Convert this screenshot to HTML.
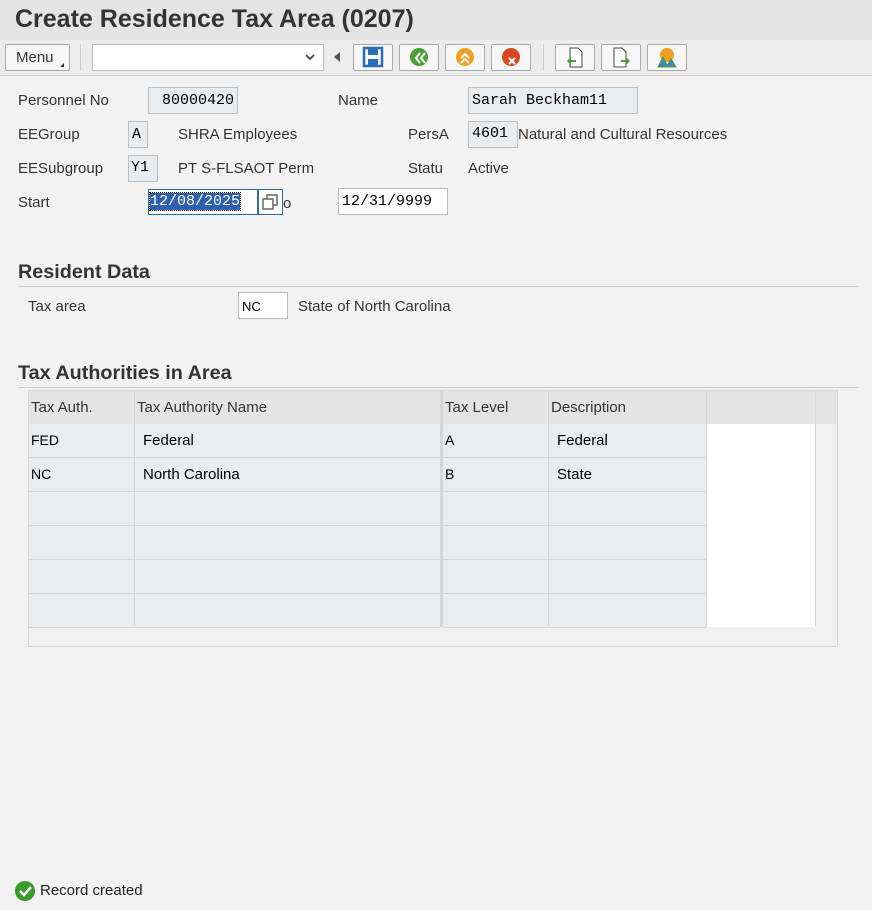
<!DOCTYPE html>
<html><head><style>
body{margin:0;width:872px;height:910px;background:#f2f2f2;font-family:"Liberation Sans",sans-serif;position:relative;overflow:hidden;color:#333}
.a{position:absolute}
.t{font-size:15px;color:#333}
.mono{font-family:"Liberation Mono",monospace;font-size:15px;color:#000}
.fld{position:absolute;border:1px solid #bfbfbf;background:#eaedf0;box-sizing:border-box}
.btn{position:absolute;top:44px;width:40px;height:27px;border:1px solid #aaa;background:#f7f7f7;box-sizing:border-box;border-radius:2px}
.cell{position:absolute;box-sizing:border-box;font-size:15px;color:#000}
</style></head><body>
<div class="a" style="left:0;top:0;width:872px;height:40px;background:#e4e4e4"></div>
<div class="a" style="left:15px;top:5px;font-size:25px;font-weight:bold;color:#333">Create Residence Tax Area (0207)</div>
<div class="a" style="left:0;top:40px;width:872px;height:35px;background:#ececec;border-bottom:1px solid #cfcfcf"></div>
<div class="a" style="left:5px;top:44px;width:65px;height:27px;border:1px solid #aaa;background:#f7f7f7;box-sizing:border-box;border-radius:2px;font-size:15px;padding:4px 0 0 10px">Menu</div>
<div class="a" style="left:60px;top:63px;border-left:4px solid transparent;border-bottom:4px solid #333"></div>
<div class="a" style="left:80px;top:44px;width:1px;height:27px;background:#ccc"></div>
<div class="a" style="left:92px;top:44px;width:232px;height:27px;border:1px solid #bbb;background:#fff;box-sizing:border-box"></div>
<svg class="a" style="left:304px;top:53px" width="12" height="10"><path d="M2 2l4 4 4-4" stroke="#555" stroke-width="2" fill="none"/></svg>
<div class="a" style="left:334px;top:52px;border-right:6px solid #555;border-top:5px solid transparent;border-bottom:5px solid transparent"></div>
<div class="btn" style="left:353px"><svg width="38" height="25"><rect x="10" y="3" width="18" height="18" fill="none" stroke="#2a6fb5" stroke-width="2.5"/><rect x="14" y="4" width="10" height="6" fill="#2a6fb5"/><rect x="14" y="14" width="10" height="6" fill="#2a6fb5"/></svg></div>
<div class="btn" style="left:399px"><svg width="38" height="25"><circle cx="19" cy="12" r="9" fill="#4aa033"/><path d="M20 8l-4 5 4 5M25 8l-4 5 4 5" stroke="#fff" stroke-width="2" fill="none"/></svg></div>
<div class="btn" style="left:445px"><svg width="38" height="25"><circle cx="19" cy="12" r="9" fill="#f0a020"/><path d="M15 13l4-4 4 4M15 18l4-4 4 4" stroke="#fff" stroke-width="2" fill="none"/></svg></div>
<div class="btn" style="left:491px"><svg width="38" height="25"><circle cx="19" cy="12" r="9" fill="#d9461f"/><path d="M17 13l6 6M23 13l-6 6" stroke="#fff" stroke-width="2"/></svg></div>
<div class="a" style="left:543px;top:44px;width:1px;height:27px;background:#ccc"></div>
<div class="btn" style="left:555px"><svg width="38" height="25"><path d="M14 3h8l4 4v15H14z" fill="#fff" stroke="#444"/><path d="M11 16l4-4v8z" fill="#4aa033"/><rect x="14" y="15" width="6" height="2" fill="#4aa033"/></svg></div>
<div class="btn" style="left:601px"><svg width="38" height="25"><path d="M12 3h8l4 4v15H12z" fill="#fff" stroke="#444"/><path d="M28 16l-4-4v8z" fill="#4aa033"/><rect x="19" y="15" width="6" height="2" fill="#4aa033"/></svg></div>
<div class="btn" style="left:647px"><svg width="38" height="25"><circle cx="19" cy="10" r="7" fill="#f0a020"/><path d="M10 22l5-10 5 10zM18 22l5-8 5 8z" fill="#3a86c8" stroke="#4aa033"/></svg></div>

<div class="a t" style="left:18px;top:92px">Personnel No</div>
<div class="fld" style="left:148px;top:87px;width:90px;height:27px"><span class="mono a" style="left:13px;top:4px">80000420</span></div>
<div class="a t" style="left:338px;top:92px">Name</div>
<div class="fld" style="left:468px;top:87px;width:170px;height:27px"><span class="mono a" style="left:3px;top:4px">Sarah Beckham11</span></div>

<div class="a t" style="left:18px;top:126px">EEGroup</div>
<div class="fld" style="left:128px;top:121px;width:20px;height:27px"><span class="mono a" style="left:3px;top:4px">A</span></div>
<div class="a t" style="left:178px;top:126px">SHRA Employees</div>
<div class="a t" style="left:408px;top:126px">PersA</div>
<div class="fld" style="left:468px;top:121px;width:50px;height:27px"><span class="mono a" style="left:3px;top:3px">4601</span></div>
<div class="a t" style="left:518px;top:126px">Natural and Cultural Resources</div>

<div class="a t" style="left:18px;top:160px">EESubgroup</div>
<div class="fld" style="left:128px;top:155px;width:30px;height:27px"><span class="mono a" style="left:2px;top:3px">Y1</span></div>
<div class="a t" style="left:178px;top:160px">PT S-FLSAOT Perm</div>
<div class="a t" style="left:408px;top:160px">Statu</div>
<div class="a t" style="left:468px;top:160px">Active</div>

<div class="a t" style="left:18px;top:194px">Start</div>
<div class="a" style="left:148px;top:189px;width:110px;height:26px;border:1px solid #2a6f9a;background:#fff;box-sizing:border-box"><span class="mono a" style="left:1px;top:3px;background:#2f5faf;color:#fff;outline:1px dotted #000">12/08/2025</span></div>
<div class="a" style="left:258px;top:189px;width:25px;height:26px;border:1px solid #2a6f9a;background:#fff;box-sizing:border-box"><svg width="23" height="24"><rect x="4" y="9" width="10" height="10" fill="none" stroke="#666" stroke-width="1.5"/><path d="M8 9V5h10v10h-4" fill="none" stroke="#666" stroke-width="1.5"/></svg></div>
<div class="a t" style="left:283px;top:195px">o</div>
<div class="a" style="left:338px;top:188px;width:110px;height:27px;border:1px solid #bbb;background:#fff;box-sizing:border-box"><span class="mono a" style="left:3px;top:4px">12/31/9999</span></div>

<div class="a" style="left:18px;top:261px;font-size:19.8px;font-weight:bold;color:#333">Resident Data</div>
<div class="a" style="left:18px;top:286px;width:840px;height:1px;background:#ccc"></div>
<div class="a t" style="left:28px;top:298px">Tax area</div>
<div class="a" style="left:238px;top:292px;width:50px;height:27px;border:1px solid #bbb;background:#fff;box-sizing:border-box"><span class="a" style="left:3px;top:6px;font-size:13px;color:#000">NC</span></div>
<div class="a t" style="left:298px;top:298px">State of North Carolina</div>

<div class="a" style="left:18px;top:362px;font-size:19.8px;font-weight:bold;color:#333">Tax Authorities in Area</div>
<div class="a" style="left:18px;top:387px;width:840px;height:1px;background:#ccc"></div>

<div class="a" style="left:28px;top:390px;width:810px;height:257px;border:1px solid #d6d6d6;background:#f0f0f0;box-sizing:border-box"></div>
<div class="a" style="left:29px;top:391px;width:808px;height:33px;background:#e4e4e4"></div>
<div class="a" style="left:706px;top:424px;width:109px;height:203px;background:#fff"></div>
<div class="a" style="left:815px;top:391px;width:1px;height:236px;background:#d6d6d6"></div>
<div class="a" style="left:706px;top:391px;width:1px;height:33px;background:#d0d0d0"></div>
<div id="tb"></div>
<script>
var cols=[[29,134],[135,440],[443,548],[549,706]];
var rows=[["FED","Federal","A","Federal"],["NC","North Carolina","B","State"],["","","",""],["","","",""],["","","",""],["","","",""]];
var h="";
cols.forEach(function(c,i){h+='<div class="a" style="left:'+(c[1])+'px;top:391px;width:'+(i==1?3:1)+'px;height:236px;background:#d6d6d6"></div>';});
var hd=["Tax Auth.","Tax Authority Name","Tax Level","Description"];
cols.forEach(function(c,i){h+='<div class="cell" style="left:'+(c[0]+2)+'px;top:399px;color:#333">'+hd[i]+'</div>';});
rows.forEach(function(r,j){var y=424+j*34;
cols.forEach(function(c,i){h+='<div class="a" style="left:'+c[0]+'px;top:'+y+'px;width:'+(c[1]-c[0])+'px;height:33px;background:#e8ecef;border-bottom:1px solid #d6d6d6"></div>';
if(r[i]){var mono=(i==0||i==2);h+='<div class="cell" style="left:'+(c[0]+(mono?2:8))+'px;top:'+(y+8)+'px;'+(mono?'font-size:14px':'')+'">'+r[i]+'</div>';}});});
document.getElementById('tb').innerHTML=h;
</script>

<svg class="a" style="left:14px;top:880px" width="22" height="22"><circle cx="11" cy="11" r="10" fill="#3a9a2a"/><path d="M6 11l4 4 7-8" stroke="#fff" stroke-width="2.5" fill="none"/></svg>
<div class="a t" style="left:40px;top:882px;color:#222">Record created</div>
</body></html>
